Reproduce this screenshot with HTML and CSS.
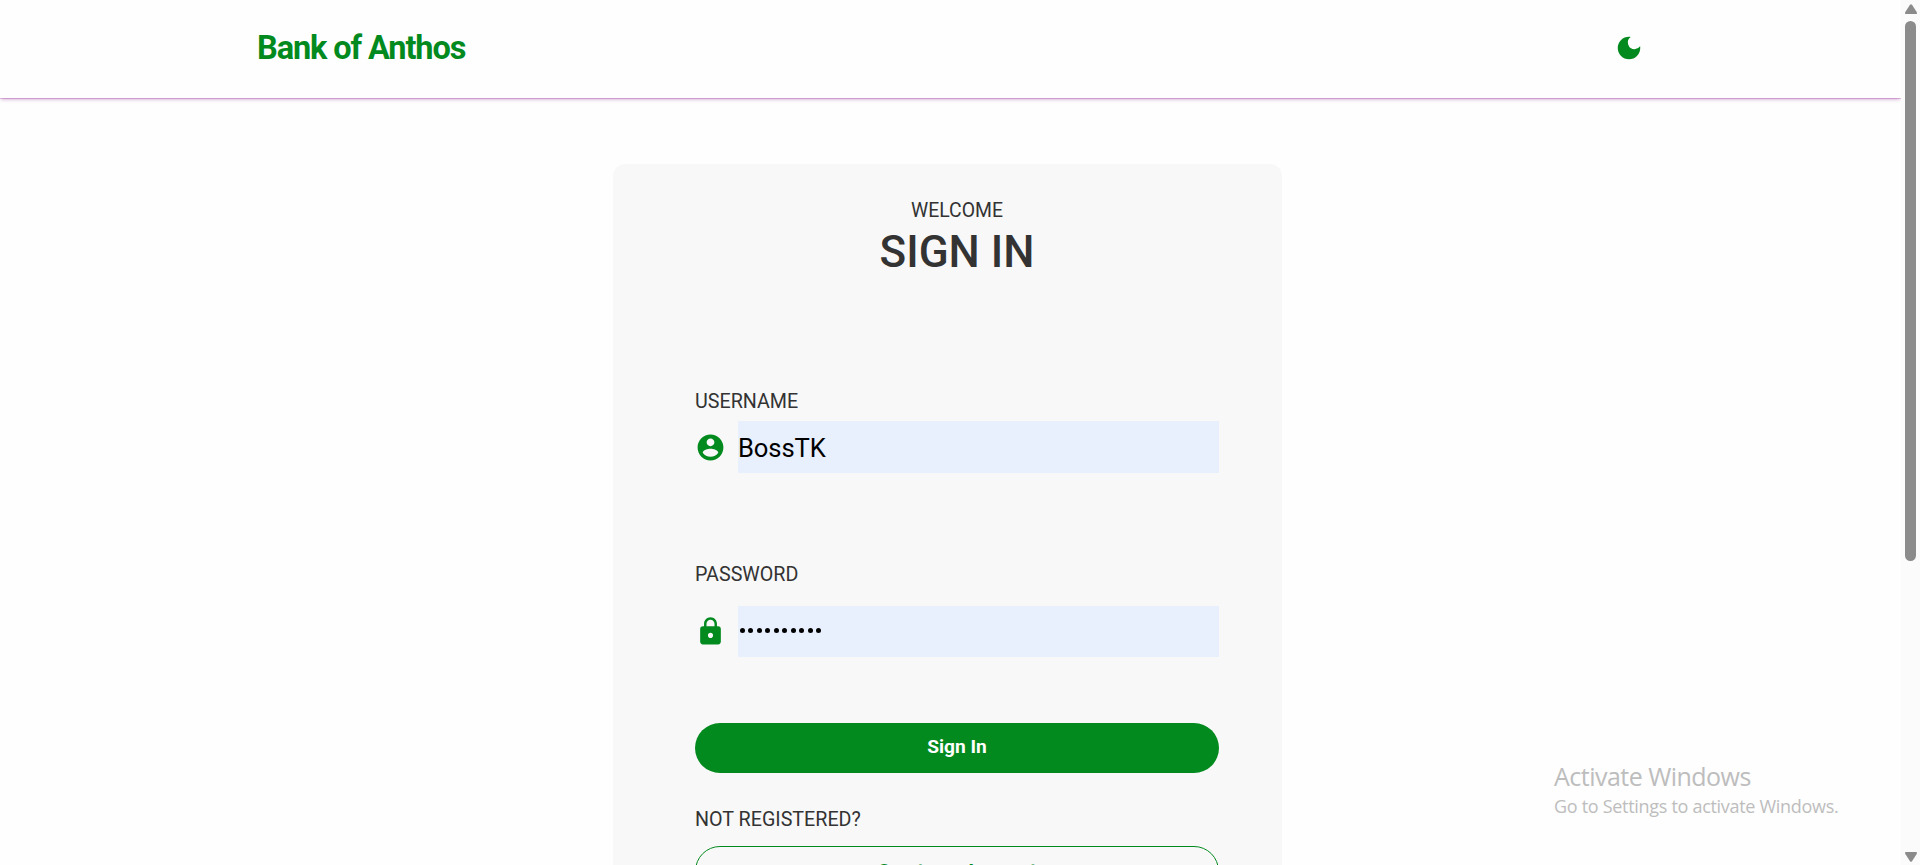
FILE: index.html
```html
<!DOCTYPE html>
<html lang="en">
<head>
<meta charset="utf-8">
<title>Bank of Anthos</title>
<link rel="stylesheet" href="styles.css">
</head>
<body>
<div class="page">
  <header class="navbar">
    <a class="brand">Bank of Anthos</a>
    <svg class="moon" viewBox="0 0 24 24"><path d="M12 3a9 9 0 1 0 9 9c0-.46-.04-.92-.1-1.36a5.389 5.389 0 0 1-4.4 2.26 5.403 5.403 0 0 1-3.14-9.8c-.44-.06-.9-.1-1.36-.1z"/></svg>
  </header>
  <main class="card">
    <p class="welcome">WELCOME</p>
    <h1 class="title">SIGN IN</h1>
    <form class="form">
      <label class="label">USERNAME</label>
      <div class="field">
        <svg class="icon" viewBox="0 0 24 24"><path d="M12 2C6.48 2 2 6.48 2 12s4.48 10 10 10 10-4.48 10-10S17.52 2 12 2zm0 3c1.66 0 3 1.34 3 3s-1.34 3-3 3-3-1.34-3-3 1.34-3 3-3zm0 14.2c-2.5 0-4.71-1.28-6-3.22.03-1.99 4-3.08 6-3.08 1.99 0 5.97 1.09 6 3.08-1.29 1.94-3.5 3.22-6 3.22z"/></svg>
        <div class="input">BossTK</div>
      </div>
      <label class="label label-password">PASSWORD</label>
      <div class="field field-password">
        <svg class="icon" viewBox="0 0 24 24"><path d="M18 8h-1V6c0-2.76-2.24-5-5-5S7 3.24 7 6v2H6c-1.1 0-2 .9-2 2v10c0 1.1.9 2 2 2h12c1.1 0 2-.9 2-2V10c0-1.1-.9-2-2-2zm-6 9c-1.1 0-2-.9-2-2s.9-2 2-2 2 .9 2 2-.9 2-2 2zm3.1-9H8.9V6c0-1.71 1.39-3.1 3.1-3.1s3.1 1.39 3.1 3.1v2z"/></svg>
        <div class="input dots"><i></i><i></i><i></i><i></i><i></i><i></i><i></i><i></i><i></i><i></i></div>
      </div>
      <button class="button primary" type="button">Sign In</button>
      <p class="label label-register">NOT REGISTERED?</p>
      <button class="button outline" type="button">Create an Account</button>
    </form>
  </main>
</div>
<aside class="watermark">
  <p class="wm-title">Activate Windows</p>
  <p class="wm-text">Go to Settings to activate Windows.</p>
</aside>
<div class="scrollbar">
  <svg class="arrow" viewBox="0 0 12 10"><path d="M5 .8Q6-.5 7 .8L11.7 8Q12.5 10 11 10H1Q-.5 10 .3 8z"/></svg>
  <div class="thumb"></div>
  <svg class="arrow down" viewBox="0 0 12 10"><path d="M5 .8Q6-.5 7 .8L11.7 8Q12.5 10 11 10H1Q-.5 10 .3 8z"/></svg>
</div>
</body>
</html>
```
FILE: styles.css
```css
* { box-sizing: border-box; }
body {
  margin: 0;
  height: 865px;
  display: flex;
  overflow: hidden;
  background: #fefefe;
  color: #333;
  font-family: Roboto, sans-serif;
}
p, h1 { margin: 0; font-weight: 400; }
svg { display: block; fill: #038a1f; }

.page { width: 1901px; height: 865px; overflow: hidden; }
.navbar {
  display: flex;
  justify-content: space-between;
  height: 98px;
  padding: 0 257px;
  box-shadow: 0 2px 4px -1px rgba(128, 0, 128, .4), 0 1px 0 rgba(128, 0, 128, .2);
}
.brand {
  padding-top: 28px;
  color: #038a1f;
  font-size: 32.5px;
  line-height: 40px;
  font-weight: 700;
  letter-spacing: -1.1px;
}
.moon { width: 30px; height: 30px; margin-top: 33px; }

.card {
  width: 669px;
  height: 800px;
  margin: 66px 0 0 613px;
  padding: 35px 63px 0 82px;
  border-radius: 12px;
  background: #f8f8f8;
}
.welcome { font-size: 19.4px; line-height: 24px; text-align: center; }
.title { margin-top: 5px; font-size: 44px; line-height: 48px; font-weight: 500; text-align: center; }
.form { padding-top: 114px; }
.label { display: block; font-size: 19.7px; line-height: 24px; }
.field { display: flex; align-items: center; gap: 12px; margin-top: 7px; }
.icon { width: 31px; height: 31px; }
.input {
  flex: 1;
  height: 52px;
  padding-top: 1px;
  background: #e8effd;
  color: #000;
  font-size: 25.6px;
  line-height: 52px;
  letter-spacing: -.1px;
}
.label-password { margin-top: 90px; }
.field-password { margin-top: 19px; }
.dots { display: flex; align-items: center; gap: 3.55px; height: 51px; padding: 0 0 2px 1.5px; }
.dots i { width: 5px; height: 5px; border-radius: 50%; background: #000; }
.button {
  display: block;
  width: 100%;
  height: 50px;
  padding: 0 0 3px;
  border: 0;
  border-radius: 25px;
  font: 700 19.2px/24px Roboto, sans-serif;
}
.primary { margin-top: 66px; background: #038a1f; color: #fff; }
.label-register { margin-top: 35px; }
.outline { margin-top: 14px; padding: 0 0 1px; border: 1px solid #038a1f; background: transparent; color: #038a1f; }

.watermark {
  position: absolute;
  left: 1554px;
  top: 761px;
  color: #bdbdbd;
  font-family: "Open Sans", sans-serif;
  white-space: nowrap;
}
.wm-title { font-size: 25px; line-height: 31px; letter-spacing: -.52px; }
.wm-text { margin-top: 1px; font-size: 18px; line-height: 26px; letter-spacing: -.3px; }

.scrollbar {
  display: flex;
  flex-direction: column;
  align-items: center;
  width: 19px;
  height: 865px;
  padding: 4px 0 3px;
  background: #fbfbfb;
}
.arrow { width: 12px; height: 10px; fill: #8b8b8b; }
.thumb { width: 11px; height: 540px; margin-top: 7px; border-radius: 6px; background: #8b8b8b; }
.down { margin-top: auto; transform: rotate(180deg); }
```
